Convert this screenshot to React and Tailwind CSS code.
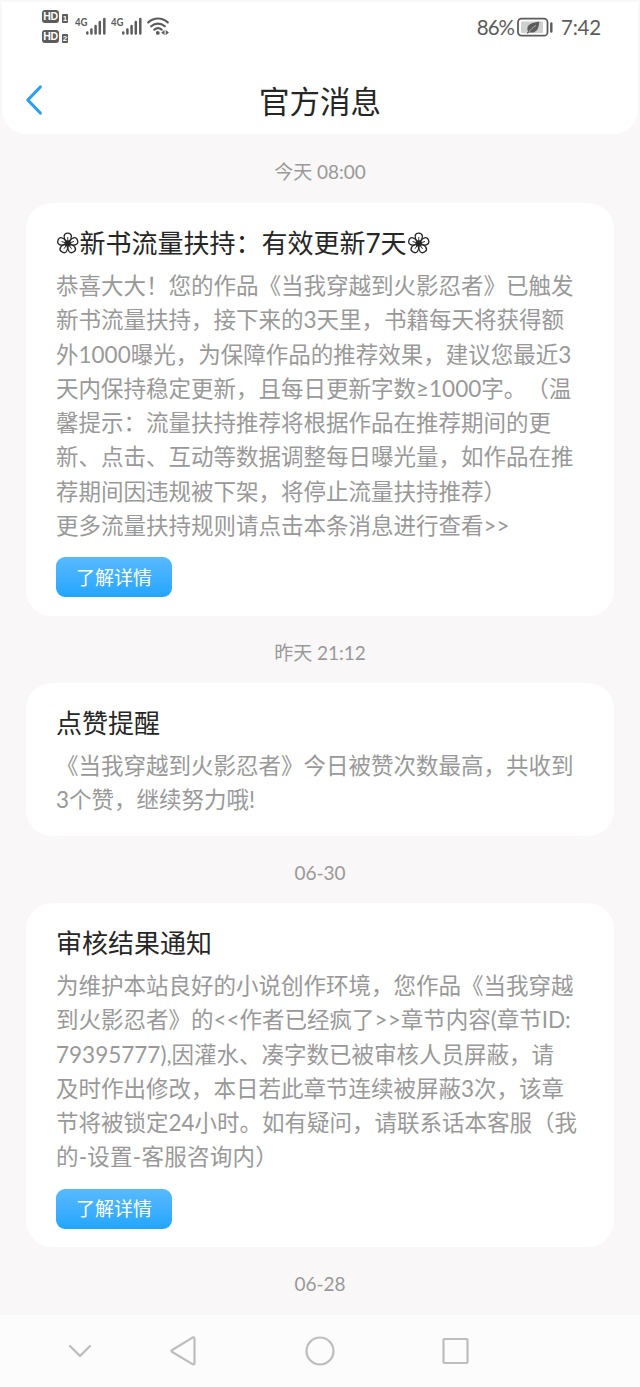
import clsx from 'clsx';

const MESSAGES = [
  {
    time: '今天 08:00',
    title: '新书流量扶持：有效更新7天',
    flowers: true,
    lines: [
      '恭喜大大！您的作品《当我穿越到火影忍者》已触发',
      '新书流量扶持，接下来的3天里，书籍每天将获得额',
      '外1000曝光，为保障作品的推荐效果，建议您最近3',
      '天内保持稳定更新，且每日更新字数≥1000字。（温',
      '馨提示：流量扶持推荐将根据作品在推荐期间的更',
      '新、点击、互动等数据调整每日曝光量，如作品在推',
      '荐期间因违规被下架，将停止流量扶持推荐）',
      '更多流量扶持规则请点击本条消息进行查看>>',
    ],
    action: '了解详情',
  },
  {
    time: '昨天 21:12',
    title: '点赞提醒',
    lines: [
      '《当我穿越到火影忍者》今日被赞次数最高，共收到',
      '3个赞，继续努力哦!',
    ],
  },
  {
    time: '06-30',
    title: '审核结果通知',
    lines: [
      '为维护本站良好的小说创作环境，您作品《当我穿越',
      '到火影忍者》的<<作者已经疯了>>章节内容(章节ID:',
      '79395777),因灌水、凑字数已被审核人员屏蔽，请',
      '及时作出修改，本日若此章节连续被屏蔽3次，该章',
      '节将被锁定24小时。如有疑问，请联系话本客服（我',
      '的-设置-客服咨询内）',
    ],
    action: '了解详情',
  },
];

const PETALS = [0, 72, 144, 216, 288];

function Flower() {
  return (
    <svg className="inline-block align-[-3px]" width="23.5" height="24" viewBox="-11.75 -11.5 23.5 24" fill="none" stroke="currentColor" strokeWidth="1.3">
      {PETALS.map(angle => (
        <g key={angle} transform={`rotate(${angle})`}>
          <path d="M-1.400-2.500C-4.600-5-4.600-10.300 0-10.300S4.600-5 1.400-2.500" />
          <path d="M0-2v-4.500" strokeWidth=".9" />
        </g>
      ))}
      <circle r="3.2" fill="currentColor" stroke="none" />
    </svg>
  );
}

function HdBadge({ sim }) {
  return (
    <div className="flex h-[13px] items-end gap-[3px] font-['Liberation_Sans'] font-bold text-white">
      <span className="flex h-[13px] w-[17px] items-center justify-center rounded-[3px] bg-[#5c5c5c] text-[10.500px] leading-none tracking-[-0.3px]">HD</span>
      <span className="flex h-[9px] w-[6px] items-center justify-center rounded-[1px] bg-[#5c5c5c] text-[8px] leading-none">{sim}</span>
    </div>
  );
}

function Signal() {
  return (
    <div className="flex">
      <span className="mt-[-1px] h-3 w-[11px] origin-left scale-x-80 text-[12px] leading-3 font-bold">4G</span>
      <svg width="20" height="18" viewBox="0 0 20 18" fill="none" stroke="currentColor" strokeWidth="2.5" strokeLinecap="round">
        <path d="M1.3 15.6v1M5.4 12.6v4M9.6 9.1v7.5M13.8 5.1v11.5M18.3 1.9v14.7" />
      </svg>
    </div>
  );
}

function StatusBar() {
  return (
    <div className="flex h-[52px] items-start justify-between pr-[37px] pl-10 text-[#5c5c5c]">
      <div className="flex">
        <div className="flex flex-col gap-[7px] pt-2">
          <HdBadge sim="1" />
          <HdBadge sim="2" />
        </div>
        <div className="flex gap-[5px] pt-[15px] pl-[7px]">
          <Signal />
          <Signal />
          <svg width="22" height="18" viewBox="0 0 22 18" fill="none" stroke="currentColor" strokeWidth="2.2" strokeLinecap="round">
            <path d="M1.3 5.4C7 .2 15 .2 20.7 5.4M4.2 9.3c4-3.7 9.6-3.7 13.6 0M7.4 12.7c2.2-1.9 5-1.9 7.2 0" />
            <circle cx="10.8" cy="15.900" r="1.900" fill="currentColor" stroke="none" />
            <path d="M17.500 13v5.200L14.300 15.600zM18.700 13v5.200l3.200-2.600z" fill="currentColor" stroke="none" />
          </svg>
        </div>
      </div>
      <div className="flex items-center pt-[12px] text-[20.500px] leading-[26px]">
        <span className="tracking-[-1px]">86%</span>
        <svg className="mr-px ml-[3px]" width="37" height="20" viewBox="0 0 37 20" fill="none">
          <rect x="1" y="1.700" width="29.500" height="17" rx="3.500" stroke="currentColor" strokeWidth="1.800" />
          <rect x="4" y="4.500" width="22" height="11.500" rx="1" fill="#d0d0d0" />
          <path d="M22.300 4.500c-6.500 1-12 2.500-12 7.500 0 1 .4 1.800.8 2.300l-1.400 1.900 1.200.6 1.300-1.600c6 1.700 9.800-2.300 10.100-10.700z" fill="currentColor" />
          <path d="M12 15c1.500-2.500 4-4.700 7-6.500" stroke="#d0d0d0" strokeWidth=".7" />
          <path d="M34.300 6.500v8" stroke="currentColor" strokeWidth="2.400" strokeLinecap="round" />
        </svg>
        <span className="ml-[6px] tracking-[-0.2px]">7:42</span>
      </div>
    </div>
  );
}

function Header() {
  return (
    <header className="h-[134px] bg-[#f9f7f8] px-0.5 pt-0.5">
      <div className="h-[132px] rounded-b-[24px] bg-white">
        <StatusBar />
        <div className="grid h-[80px] grid-cols-[80px_1fr_80px] pt-[22px]">
          <svg className="mt-[7px] ml-[22px]" width="20" height="34" viewBox="0 0 20 34" fill="none" stroke="#2d9fee" strokeWidth="3.2" strokeLinecap="round" strokeLinejoin="round">
            <path d="M16.300 4L3.800 17l12.500 13" />
          </svg>
          <h1 className="pt-[2px] text-center text-[30.500px] leading-[46px] text-[#262626]">官方消息</h1>
        </div>
      </div>
    </header>
  );
}

function Message({ message }) {
  return (
    <section className="rounded-[26px] bg-white px-[30px] pt-[23px] pb-[18.500px]">
      <h2 className="h-[34px] text-[26px] leading-[34px] whitespace-nowrap text-[#262626]">
        {message.flowers && <Flower />}
        {message.title}
        {message.flowers && <Flower />}
      </h2>
      <div className="mt-[9px] text-[22.500px] leading-[34.300px] whitespace-nowrap text-[#999]">
        {message.lines.map(line => (
          <p key={line} className={clsx(line.startsWith('的-') && 'tracking-[0.25px]')}>{line}</p>
        ))}
      </div>
      {message.action && (
        <button className="mt-[14px] flex h-[40px] w-[116px] items-center justify-center rounded-[9px] bg-linear-to-b from-[#57baff] to-[#20a5ff] pt-px text-[19px] text-white">
          {message.action}
        </button>
      )}
    </section>
  );
}

function TimeLabel({ children, first }) {
  return (
    <div className={clsx('text-center text-[19px] leading-[30px] text-[#999]', first ? 'h-[69px] pt-[23px]' : 'h-[67px] pt-[22px]')}>
      {children}
    </div>
  );
}

function NavBar() {
  return (
    <nav className="h-[72px] bg-[#fcfcfc]">
      <svg width="640" height="72" viewBox="0 0 640 72" fill="none" stroke="#bdbdbd" strokeWidth="2.200" strokeLinecap="round" strokeLinejoin="round">
        <path d="M70 31l10 10 10-10" />
        <path d="M192.500 22.600q2-.9 2 1.300v24q0 2.200-2 1.200L172.200 37q-1.500-1 0-2z" />
        <circle cx="320" cy="36" r="13.500" />
        <rect x="443.500" y="24" width="24" height="24" rx="1" />
      </svg>
    </nav>
  );
}

export default function App() {
  return (
    <div className="flex h-[1387px] w-[640px] flex-col overflow-hidden bg-[#f9f7f8] font-[Lato,'Noto_Sans_CJK_SC','DejaVu_Sans',sans-serif] [text-spacing-trim:space-all]">
      <Header />
      <main className="h-[1181px] px-[26px]">
        {MESSAGES.map((message, i) => (
          <div key={message.time}>
            <TimeLabel first={i === 0}>{message.time}</TimeLabel>
            <Message message={message} />
          </div>
        ))}
        <TimeLabel>06-28</TimeLabel>
      </main>
      <NavBar />
    </div>
  );
}
